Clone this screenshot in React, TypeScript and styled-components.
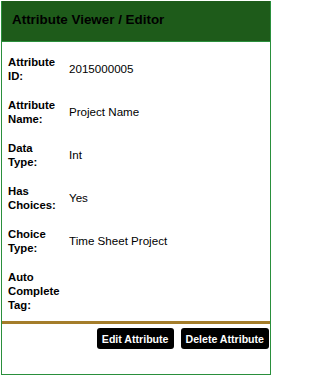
import React from 'react';
import styled, { createGlobalStyle } from 'styled-components';

const GlobalStyle = createGlobalStyle`
  html, body {
    margin: 0;
    padding: 0;
    background: #ffffff;
  }
  body {
    font-family: "Liberation Sans", Arial, sans-serif;
    color: #000000;
  }
`;

const Panel = styled.div`
  box-sizing: border-box;
  margin: 1px;
  width: 270px;
  height: 374px;
  border: 1px solid #2a8f3c;
  border-top: none;
  display: flex;
  flex-direction: column;
`;

const Header = styled.div`
  background-color: #1e5b1a;
  border-bottom: 1px solid #2a8f3c;
  height: 40px;
  padding: 0 10px;
  display: flex;
  align-items: center;
`;

const Title = styled.div`
  margin: 0 0 2px 0;
  font-size: 13.4px;
  line-height: 16px;
  font-weight: bold;
  color: #000000;
`;

const FieldGrid = styled.div`
  display: grid;
  grid-template-columns: 56px 1fr;
  column-gap: 5px;
  row-gap: 15px;
  padding: 13px 6px 9px 6px;
  border-bottom: 3px solid #a47d2a;
`;

const Label = styled.div`
  font-size: 11.3px;
  line-height: 14px;
  font-weight: bold;
`;

const Value = styled.div`
  font-size: 11.6px;
  line-height: 14px;
  align-self: center;
`;

const Footer = styled.div`
  display: flex;
  justify-content: flex-end;
  gap: 7px;
  padding: 4px 1px 0 0;
`;

const Button = styled.button`
  background: #000000;
  color: #ffffff;
  border: none;
  border-radius: 3px;
  height: 21px;
  padding: 0 5px;
  font-family: "Liberation Sans", Arial, sans-serif;
  font-size: 10.6px;
  font-weight: bold;
  cursor: pointer;
`;

type Field = {
  label: string;
  value: string;
};

const fields: Field[] = [
  { label: 'Attribute ID:', value: '2015000005' },
  { label: 'Attribute Name:', value: 'Project Name' },
  { label: 'Data Type:', value: 'Int' },
  { label: 'Has Choices:', value: 'Yes' },
  { label: 'Choice Type:', value: 'Time Sheet Project' },
  { label: 'Auto Complete Tag:', value: '' },
];

export default function App() {
  return (
    <>
      <GlobalStyle />
      <Panel>
        <Header>
          <Title>Attribute Viewer / Editor</Title>
        </Header>
        <FieldGrid>
          {fields.map((f) => (
            <React.Fragment key={f.label}>
              <Label>{f.label}</Label>
              <Value>{f.value}</Value>
            </React.Fragment>
          ))}
        </FieldGrid>
        <Footer>
          <Button>Edit Attribute</Button>
          <Button>Delete Attribute</Button>
        </Footer>
      </Panel>
    </>
  );
}
